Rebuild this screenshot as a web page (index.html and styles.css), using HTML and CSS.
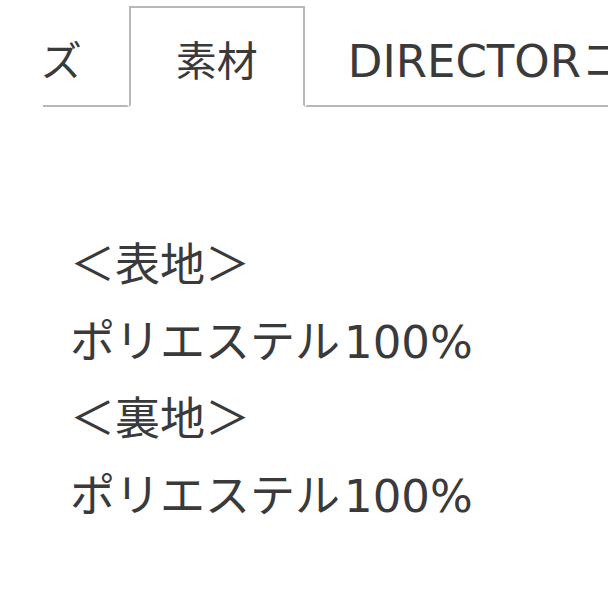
FILE: index.html
```html
<!DOCTYPE html>
<html lang="ja">
<head>
<meta charset="utf-8">
<link rel="stylesheet" href="styles.css">
</head>
<body>
<div class="tabs">
  <ul class="tab-list">
    <li class="tab tab-ja">サイズ</li>
    <li class="tab tab-ja tab-active">素材</li>
    <li class="tab">DIRECTORコメント</li>
  </ul>
</div>
<div class="panel">
  <p class="line">＜表地＞</p>
  <p class="line">ポリエステル<span class="num">100%</span></p>
  <p class="line">＜裏地＞</p>
  <p class="line">ポリエステル<span class="num">100%</span></p>
</div>
</body>
</html>
```

FILE: styles.css
```css
html, body {
  margin: 0;
  padding: 0;
  background: #fff;
  overflow: hidden;
}
body {
  width: 608px;
  height: 608px;
  font-family: "DejaVu Sans", "Noto Sans CJK JP", sans-serif;
  color: #3a3a3a;
  font-size: 45px;
}
.tabs {
  margin-left: 43px;
  padding-top: 6px;
  overflow: hidden;
}
.tab-list {
  list-style: none;
  margin: 0 0 0 -130px;
  padding: 0;
  display: flex;
  white-space: nowrap;
}
.tab {
  flex: none;
  line-height: 44px;
  padding: 32px 41px 21px;
  border: 2px solid transparent;
  border-bottom-color: #b8b8b8;
}
.tab-ja {
  font-size: 41px;
  padding-left: 45px;
  padding-right: 45px;
}
.tab-active {
  border-color: #b8b8b8;
  border-bottom-color: #fff;
}
.panel {
  padding: 120px 0 0 70px;
}
.line {
  margin: 0;
  line-height: 77px;
}
.num {
  margin-left: 4px;
}
```
